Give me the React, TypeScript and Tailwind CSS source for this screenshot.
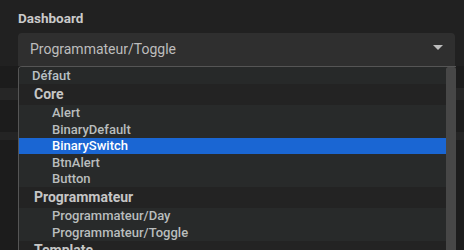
import React from "react";

type Entry = { label: string; kind: "top" | "group" | "item"; selected?: boolean };

const entries: Entry[] = [
	{ label: "Défaut", kind: "top" },
	{ label: "Core", kind: "group" },
	{ label: "Alert", kind: "item" },
	{ label: "BinaryDefault", kind: "item" },
	{ label: "BinarySwitch", kind: "item", selected: true },
	{ label: "BtnAlert", kind: "item" },
	{ label: "Button", kind: "item" },
	{ label: "Programmateur", kind: "group" },
	{ label: "Programmateur/Day", kind: "item" },
	{ label: "Programmateur/Toggle", kind: "item" },
	{ label: "Template", kind: "group" },
];

function Row({ entry }: { entry: Entry }) {
	if (entry.kind === "group") {
		return (
			<div className="flex h-[20.5px] shrink-0 items-center bg-[#232323] pl-[15px] text-[14px] font-bold text-[#c6c6c6]">
				{entry.label}
			</div>
		);
	}
	if (entry.kind === "top") {
		return (
			<div className="flex h-[17px] shrink-0 items-center bg-[#272929] pl-[13px] text-[13px] font-medium text-[#b9c0c4]">
				{entry.label}
			</div>
		);
	}
	return (
		<div
			className={`flex h-[16.5px] shrink-0 items-center pl-[33px] text-[13px] font-medium ${
				entry.selected
					? "bg-[#1a66d3] font-bold text-white"
					: "bg-[#282a2a] text-[#b9bdbd]"
			}`}
		>
			{entry.label}
		</div>
	);
}

export default function App() {
	return (
		<div
			className="relative h-[250px] w-[464px] overflow-hidden bg-[#212121]"
			style={{ fontFamily: "Roboto, 'Liberation Sans', sans-serif" }}
		>
			<div className="px-[18px] pt-[10px]">
				<div className="h-[23px] text-[13.5px] font-bold leading-[16px] text-[#cacaca]">
					Dashboard
				</div>
				<div className="flex h-[33px] w-[437px] items-center justify-between rounded-t-[4px] bg-[#2f2f2f] pl-[12px] pr-[12px]">
					<span className="text-[14px] text-[#bdbdbd]">Programmateur/Toggle</span>
					<svg width="10" height="6" viewBox="0 0 10 6" className="mb-[4px]">
						<path d="M0 0 H10 L5 5 Z" fill="#bdbdbd" />
					</svg>
				</div>
			</div>

			{/* content behind the menu */}
			<div className="flex flex-col">
				<div className="h-[22px] bg-[#1c1c1c]" />
				<div className="h-[12px] bg-[#262626]" />
				<div className="h-[32px] bg-[#1c1c1c]" />
				<div className="h-[8px] bg-[#242424]" />
				<div className="h-[110px] bg-[#1c1c1c]" />
			</div>

			{/* dropdown menu */}
			<div className="absolute left-[18px] top-[66px] flex w-[438px] overflow-hidden rounded-tl-[4px] border-l border-t border-[#555555]">
				<div className="flex flex-1 flex-col">
					{entries.map((e) => (
						<Row key={e.label} entry={e} />
					))}
				</div>
				<div className="w-[10px] shrink-0 rounded-t-[2px] bg-[#474747]" />
			</div>
		</div>
	);
}
